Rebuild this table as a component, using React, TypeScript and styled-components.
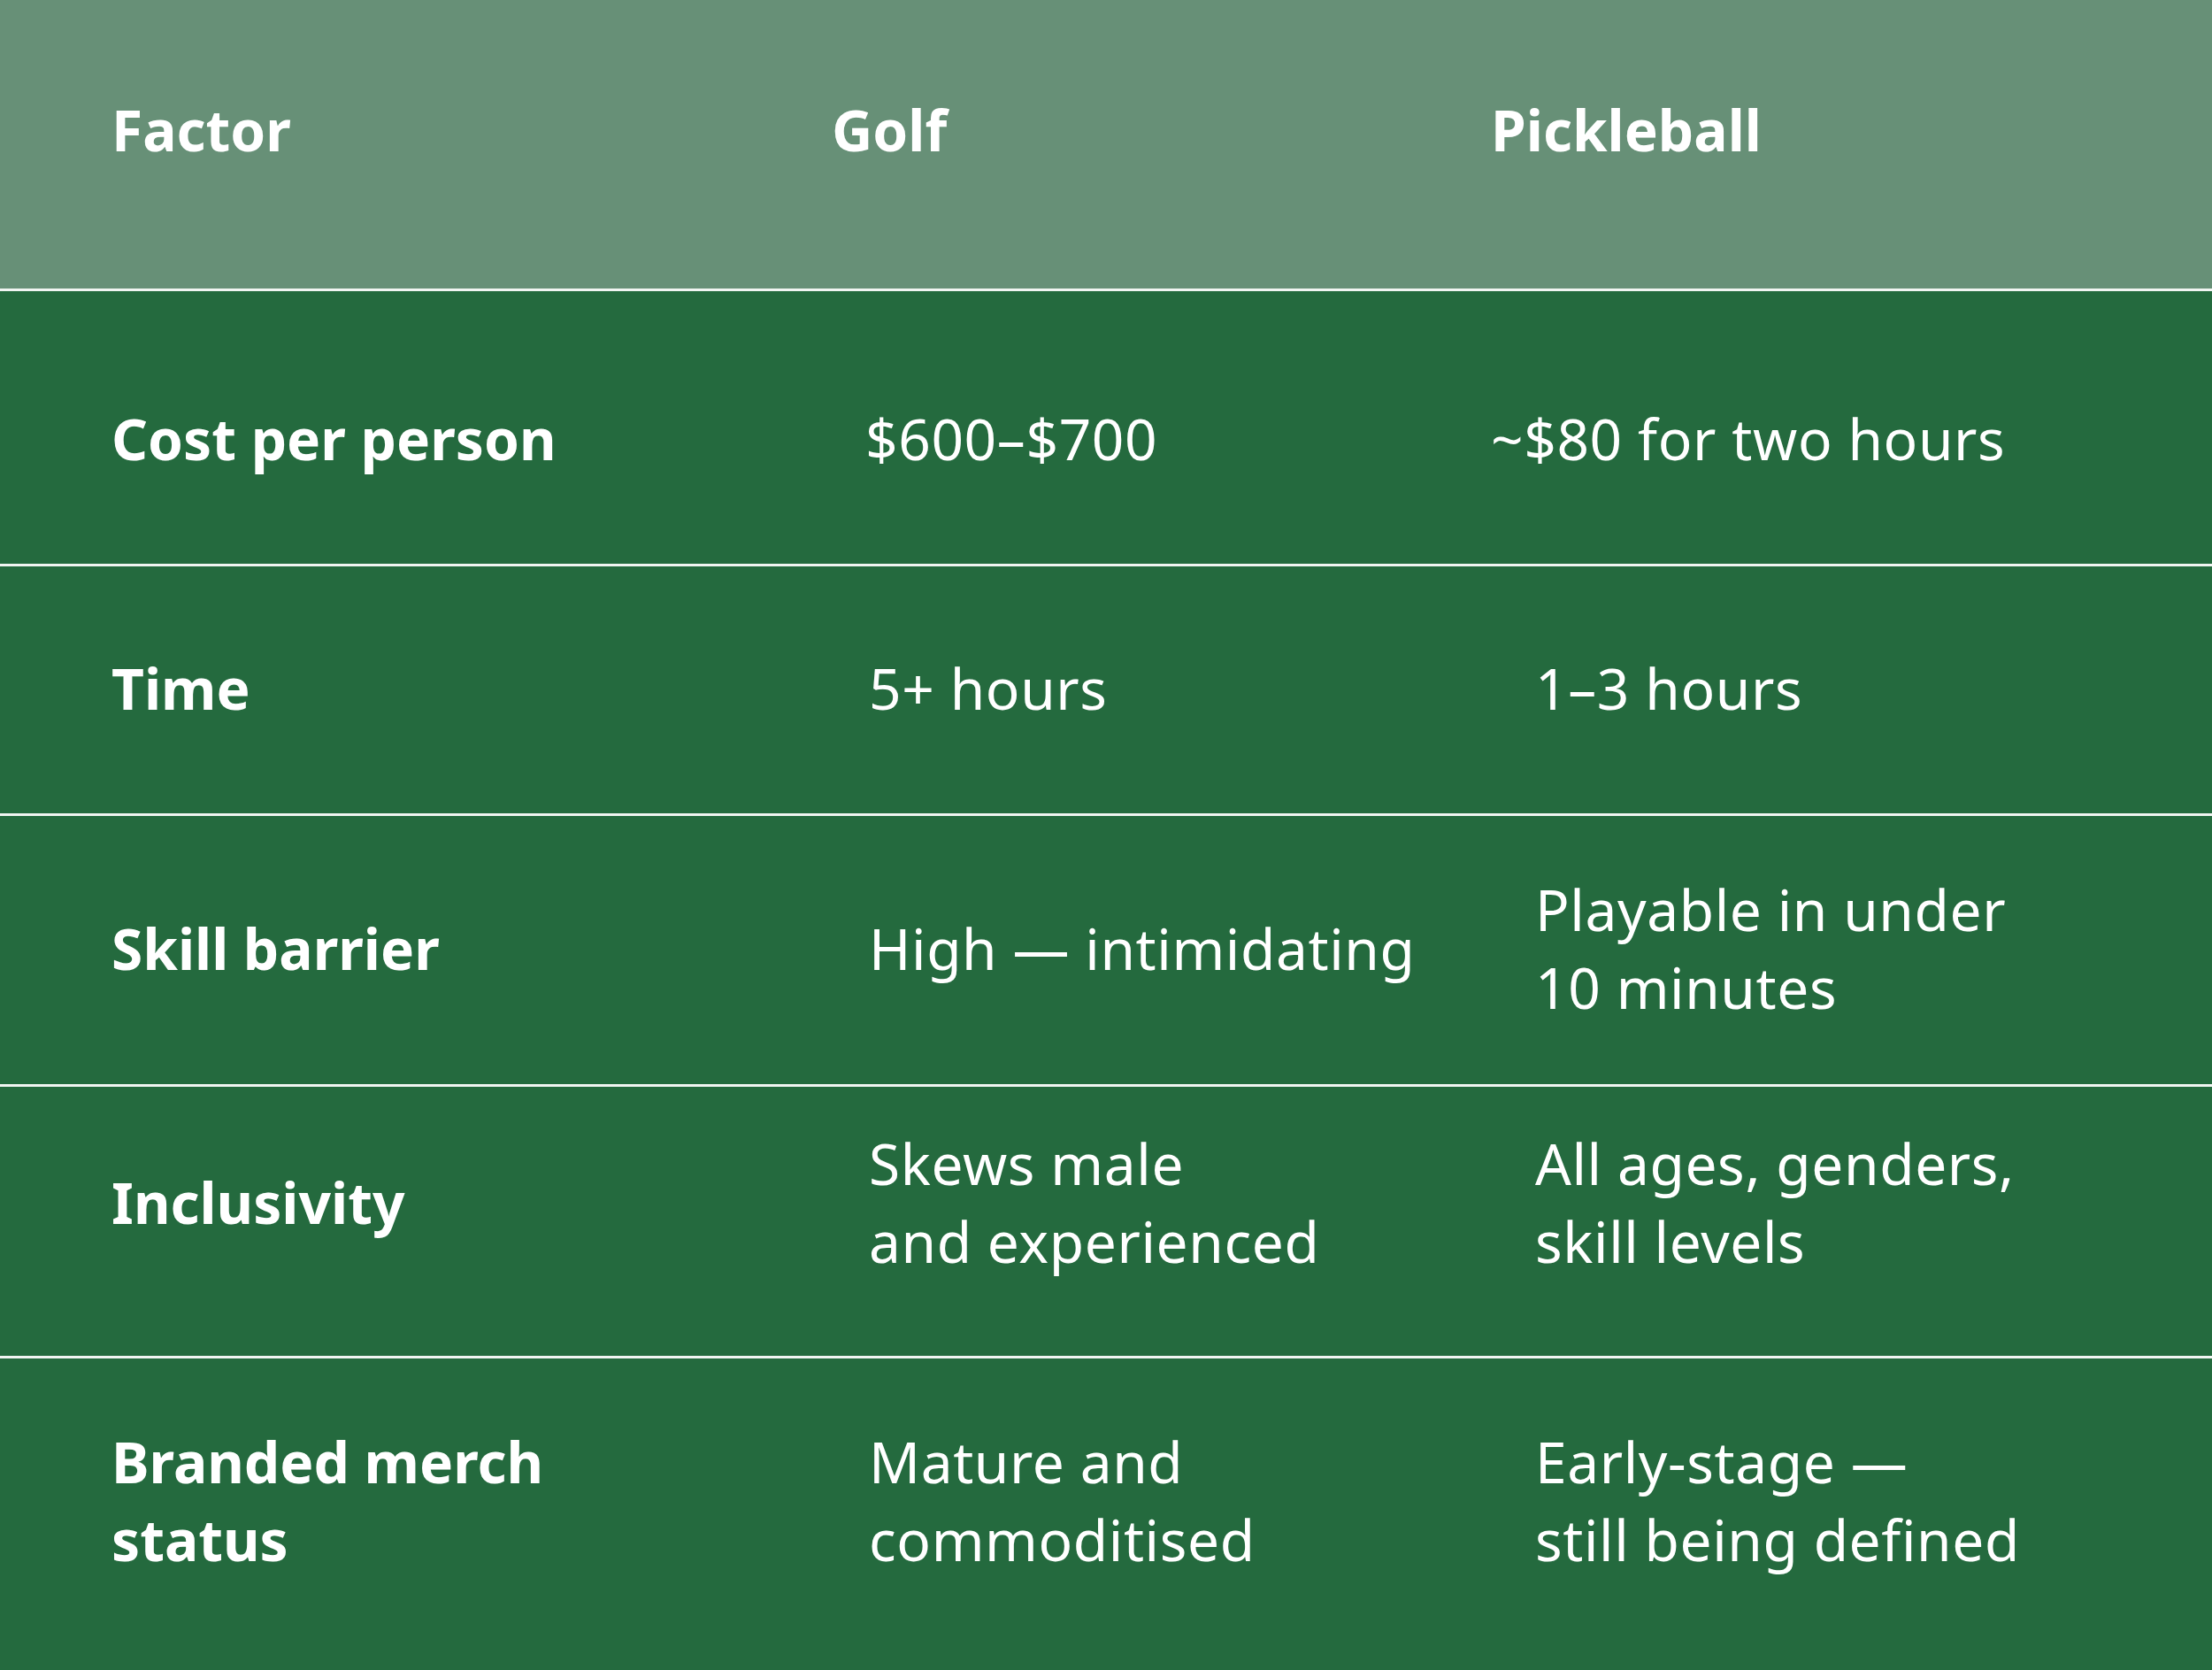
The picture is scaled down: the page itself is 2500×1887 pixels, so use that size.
import React from "react";
import styled, { createGlobalStyle } from "styled-components";

const GlobalStyle = createGlobalStyle`
  html, body {
    margin: 0;
    padding: 0;
    background: #246a3e;
  }

  body {
    font-family: "Noto Sans", "Open Sans", sans-serif;
    color: #ffffff;
  }
`;

const StyledTable = styled.div`
  width: 2500px;
  height: 1887px;

  overflow: hidden;

  display: flex;
  flex-direction: column;

  background: #246a3e;
`;

const StyledRow = styled.div<{ $height: number; $shift: number; $isHeader?: boolean }>`
  height: ${(props) => props.$height}px;
  box-sizing: border-box;

  padding-left: 126px;
  padding-top: ${(props) => (props.$shift > 0 ? props.$shift * 2 : 0)}px;
  padding-bottom: ${(props) => (props.$shift < 0 ? -props.$shift * 2 : 0)}px;

  display: grid;
  grid-template-columns: 814px 745px 1fr;
  align-items: center;

  background: ${(props) => (props.$isHeader ? "#679077" : "#246a3e")};
  border-top: ${(props) => (props.$isHeader ? "none" : "3px solid #f1f5f2")};
`;

const StyledCell = styled.div<{ $bold?: boolean; $indent?: number }>`
  padding-left: ${(props) => props.$indent || 0}px;

  font-size: 64px;
  line-height: 88px;
  font-weight: ${(props) => (props.$bold ? 700 : 400)};
  letter-spacing: ${(props) => (props.$bold ? "0" : "0.6px")};
  white-space: pre-line;
`;

interface RowData {
  factor: string;
  golf: string;
  pickleball: string;
  height: number;
  shift: number;
  golfIndent: number;
  pickleIndent: number;
}

const rows: RowData[] = [
  {
    factor: "Cost per person",
    golf: "$600–$700",
    pickleball: "~$80 for two hours",
    height: 311,
    shift: 13,
    golfIndent: 38,
    pickleIndent: 0,
  },
  {
    factor: "Time",
    golf: "5+ hours",
    pickleball: "1–3 hours",
    height: 282,
    shift: -2,
    golfIndent: 42,
    pickleIndent: 50,
  },
  {
    factor: "Skill barrier",
    golf: "High — intimidating",
    pickleball: "Playable in under\n10 minutes",
    height: 306,
    shift: -2,
    golfIndent: 42,
    pickleIndent: 50,
  },
  {
    factor: "Inclusivity",
    golf: "Skews male\nand experienced",
    pickleball: "All ages, genders,\nskill levels",
    height: 307,
    shift: -21,
    golfIndent: 42,
    pickleIndent: 50,
  },
  {
    factor: "Branded merch\nstatus",
    golf: "Mature and\ncommoditised",
    pickleball: "Early-stage —\nstill being defined",
    height: 355,
    shift: -15,
    golfIndent: 42,
    pickleIndent: 50,
  },
];

const App = () => {
  return (
    <>
      <GlobalStyle />
      <StyledTable>
        <StyledRow $height={326} $shift={-16} $isHeader>
          <StyledCell $bold>Factor</StyledCell>
          <StyledCell $bold>Golf</StyledCell>
          <StyledCell $bold>Pickleball</StyledCell>
        </StyledRow>
        {rows.map((row) => (
          <StyledRow key={row.factor} $height={row.height} $shift={row.shift}>
            <StyledCell $bold>{row.factor}</StyledCell>
            <StyledCell $indent={row.golfIndent}>{row.golf}</StyledCell>
            <StyledCell $indent={row.pickleIndent}>{row.pickleball}</StyledCell>
          </StyledRow>
        ))}
      </StyledTable>
    </>
  );
};

export default App;
